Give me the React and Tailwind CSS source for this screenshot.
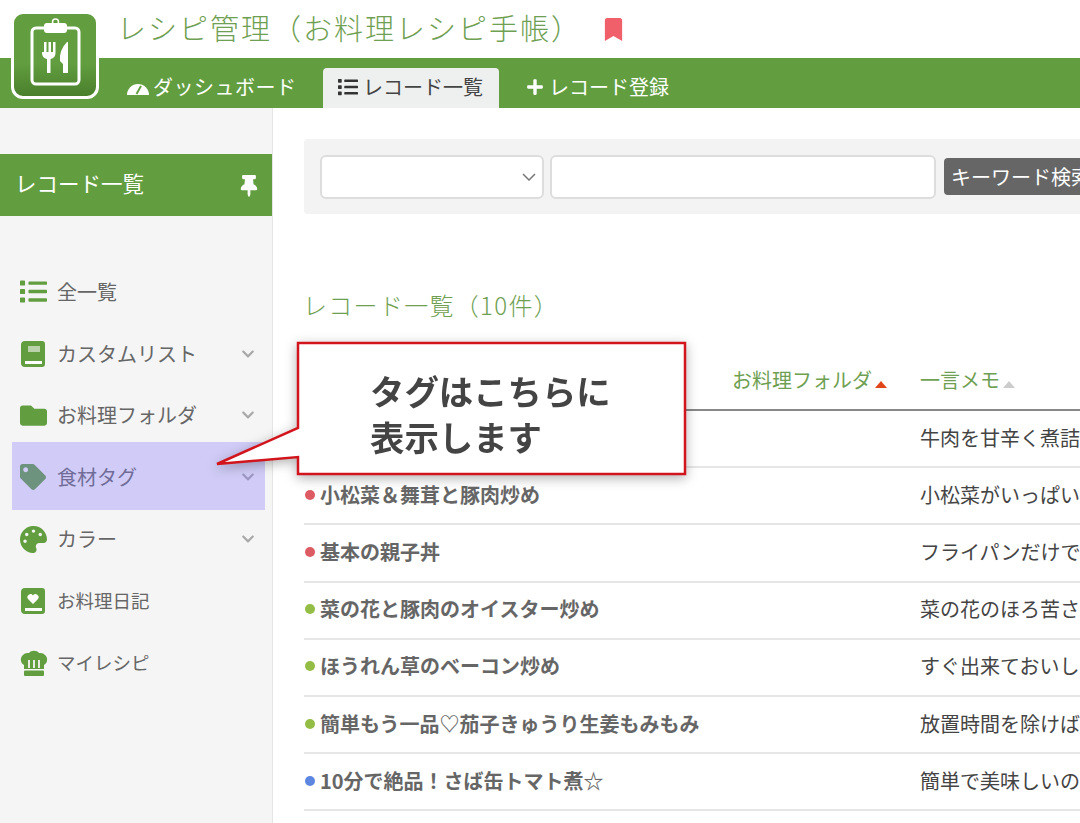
import { FaBookmark, FaChevronDown, FaFolder, FaList, FaPalette, FaPlus, FaTag, FaThumbtack } from "react-icons/fa";

const BookIcon = ({ heart }) => (
  <svg viewBox="0 0 26 28" className="w-[26px] h-[28px]">
    <path d="M5 1h17a3 3 0 0 1 3 3v20a3 3 0 0 1-3 3H5a4 4 0 0 1-4-4V5a4 4 0 0 1 4-4z" fill="#629e40" />
    <rect x="5" y="21" width="17" height="3" fill="#fff" />
    {heart ? (
      <path d="M13 17l-5-5a3 3 0 0 1 5-3.500a3 3 0 0 1 5 3.500z" fill="#fff" />
    ) : (
      <rect x="8" y="6" width="12" height="6" fill="#b9d2a9" />
    )}
  </svg>
);

const ChefIcon = () => (
  <svg viewBox="0 0 28 26" className="w-[28px] h-[26px]">
    <path d="M4 15C0 13 0 7 3 5c2-2 4-2 6-2 2-3 8-3 10 0 2 0 4 0 6 2 3 2 3 8-1 10v4H4z" fill="#629e40" />
    <path d="M9 10v8M14 10v8M19 10v8" stroke="#f5f5f5" strokeWidth="1.800" />
    <rect x="4" y="20.500" width="20" height="5.500" rx="1" fill="#629e40" />
  </svg>
);

const GaugeIcon = () => (
  <svg viewBox="0 0 22 16" className="w-[22px] h-[16px]">
    <path d="M0 16a11 11 0 1 1 22 0z" fill="#fff" />
    <path d="M9.500 15L14 7" stroke="#629e40" strokeWidth="2" />
  </svg>
);

const menu = [
  { label: "全一覧", icon: <FaList size={27} />, size: "text-[20px]" },
  { label: "カスタムリスト", icon: <BookIcon />, arrow: true, size: "text-[20px]" },
  { label: "お料理フォルダ", icon: <FaFolder size={27} />, arrow: true, size: "text-[20px]" },
  { label: "食材タグ", icon: <FaTag size={26} />, arrow: true, size: "text-[20px]" },
  { label: "カラー", icon: <FaPalette size={27} />, arrow: true, size: "text-[20px]" },
  { label: "お料理日記", icon: <BookIcon heart />, size: "text-[18.500px]" },
  { label: "マイレシピ", icon: <ChefIcon />, size: "text-[18.500px]" },
];

const rows = [
  { name: "", memo: "牛肉を甘辛く煮詰めて" },
  { name: "小松菜＆舞茸と豚肉炒め", dot: "bg-[#dd5b63]", memo: "小松菜がいっぱい食べ" },
  { name: "基本の親子丼", dot: "bg-[#dd5b63]", memo: "フライパンだけで簡単" },
  { name: "菜の花と豚肉のオイスター炒め", dot: "bg-[#93bd44]", memo: "菜の花のほろ苦さが" },
  { name: "ほうれん草のベーコン炒め", dot: "bg-[#93bd44]", memo: "すぐ出来ておいしい" },
  { name: "簡単もう一品♡茄子きゅうり生姜もみもみ", dot: "bg-[#93bd44]", memo: "放置時間を除けば" },
  { name: "10分で絶品！さば缶トマト煮☆", dot: "bg-[#5d86e0]", memo: "簡単で美味しいの" },
];

const Triangle = ({ className }) => (
  <svg viewBox="0 0 12 7" className={`w-[12px] h-[7px] mt-[8px] ${className}`}>
    <polygon points="6,0 12,7 0,7" fill="currentColor" />
  </svg>
);

const App = () => {
  return (
    <div className="relative w-[1080px] h-[823px] overflow-hidden bg-white text-[#555] font-['Noto_Sans_CJK_JP','Noto_Sans',sans-serif]">
      {/* Title */}
      <div className="h-[58px] pl-[117px] flex items-center">
        <h1 className="text-[29px] tracking-[2px] font-light text-[#6f9f52] whitespace-nowrap pb-[2px]">レシピ管理（お料理レシピ手帳）</h1>
        <FaBookmark size={23} className="ml-[20px] text-[#f0606a]" />
      </div>

      {/* Nav */}
      <div className="h-[50px] bg-[#629e40] pl-[127px] flex items-end text-[20px] whitespace-nowrap">
        <div className="h-[40px] w-[196px] pb-[3px] flex items-center gap-[4px] text-white tracking-[0.500px]">
          <GaugeIcon />
          <span>ダッシュボード</span>
        </div>
        <div className="h-[40px] w-[176px] pl-[15px] pb-[3px] flex items-center gap-[5px] rounded-t bg-[#eef0f0] text-[#444]">
          <FaList size={20} className="text-[#333]" />
          <span>レコード一覧</span>
        </div>
        <div className="h-[40px] pl-[27px] pb-[3px] flex items-center gap-[5px] text-white">
          <FaPlus size={18} />
          <span>レコード登録</span>
        </div>
      </div>

      {/* Logo */}
      <div className="absolute left-[11px] top-[11px] w-[88px] h-[88px] rounded-xl border-[3px] border-white bg-gradient-to-b from-[#629e40] from-60% to-[#4a7f2c]">
        <svg viewBox="0 0 82 82" className="w-full h-full">
          <rect x="18" y="14" width="47" height="56" rx="4" fill="none" stroke="#fff" strokeWidth="3" />
          <rect x="30" y="9" width="23" height="10" rx="3" fill="#fff" />
          <circle cx="41.500" cy="8" r="3" fill="none" stroke="#fff" strokeWidth="1.500" />
          <path d="M28 28v11q0 5 5 6v14h3.500V45q5-1 5-6V28h-2.500v10h-2V28h-2.500v10h-2V28h-2.500v10h-2V28z" fill="#fff" />
          <path d="M53 28q-8 8-7 19l3 3v9h5V28z" fill="#fff" />
        </svg>
      </div>

      <div className="flex h-[715px]">
        {/* Sidebar */}
        <aside className="w-[273px] shrink-0 bg-[#f5f5f5] border-r border-[#e5e5e5] pt-[46px]">
          <div className="h-[62px] bg-[#629e40] pl-[15px] pr-[12px] pb-[3px] flex items-center justify-between text-white text-[21.500px]">
            <span>レコード一覧</span>
            <FaThumbtack size={22} className="mt-[4px]" />
          </div>
          <ul className="mt-[45px]">
            {menu.map((item) => (
              <li key={item.label} className="h-[61.800px] pl-[20px] pr-[17px] flex items-center">
                <span className="w-[37px] flex items-center text-[#629e40]">{item.icon}</span>
                <span className={`flex-1 text-[#666] ${item.size}`}>{item.label}</span>
                {item.arrow && <FaChevronDown size={14} className="text-[#a8a8a8]" />}
              </li>
            ))}
          </ul>
        </aside>

        {/* Main */}
        <main className="flex-1 min-w-0 pl-[31px] pt-[31px]">
          <div className="h-[75px] bg-[#f3f3f3] rounded-l pl-[16px] flex items-center whitespace-nowrap">
            <div className="w-[224px] h-[44px] shrink-0 bg-white border-2 border-[#ddd] rounded-md pr-[6px] flex items-center justify-end">
              <svg viewBox="0 0 14 8" className="w-[14px] h-[8px]">
                <polyline points="1,1 7,7 13,1" fill="none" stroke="#777" strokeWidth="1.500" />
              </svg>
            </div>
            <div className="w-[386px] h-[44px] shrink-0 ml-[6px] bg-white border-2 border-[#ddd] rounded-md" />
            <button className="w-[170px] h-[37px] shrink-0 ml-[8px] bg-[#666] rounded-sm text-white text-[20px] text-left pl-[7px]">キーワード検索</button>
          </div>

          <h2 className="mt-[74px] h-[34px] leading-[34px] -ml-[1px] text-[24px] tracking-[1.300px] font-light text-[#6f9f52] whitespace-nowrap">レコード一覧（10件）</h2>

          <div className="mt-[33px] h-[56px] border-b-2 border-[#888] flex text-[20px] text-[#6f9f52] whitespace-nowrap">
            <div className="ml-[428px] w-[188px] h-[50px] flex items-center gap-[3px]">
              <span>お料理フォルダ</span>
              <Triangle className="text-[#e0461a]" />
            </div>
            <div className="h-[50px] flex items-center gap-[3px]">
              <span>一言メモ</span>
              <Triangle className="text-[#ccc]" />
            </div>
          </div>

          {rows.map((row) => (
            <div key={row.memo} className="h-[57.200px] pb-[2px] border-b-2 border-[#e6e6e6] flex items-center text-[20px] whitespace-nowrap">
              <div className="w-[616px] shrink-0 flex items-center gap-[5px] font-bold text-[#666]">
                {row.dot && <span className={`w-[10px] h-[10px] ml-[1px] rounded-full ${row.dot}`} />}
                <span>{row.name}</span>
              </div>
              <div className="text-[#444]">{row.memo}</div>
            </div>
          ))}
        </main>
      </div>

      {/* Highlight on the tag menu */}
      <div className="absolute left-[12px] top-[442px] w-[253px] h-[68px] bg-[#8579fb]/[0.33]" />

      {/* Callout */}
      <div className="absolute left-[205px] top-[335px] w-[490px] h-[150px] drop-shadow-[0_3px_6px_rgba(0,0,0,0.3)]">
        <svg viewBox="205 335 490 150" className="w-full h-full">
          <polygon points="298,343 685,343 685,474 298,474 298,457 217,464 298,428" fill="#fff" stroke="#d2141c" strokeWidth="2.500" />
        </svg>
        <div className="absolute left-[165px] top-[32px] text-[34.400px] leading-[46px] font-bold text-[#444] whitespace-nowrap">
          <p>タグはこちらに</p>
          <p>表示します</p>
        </div>
      </div>
    </div>
  );
};

export default App;
